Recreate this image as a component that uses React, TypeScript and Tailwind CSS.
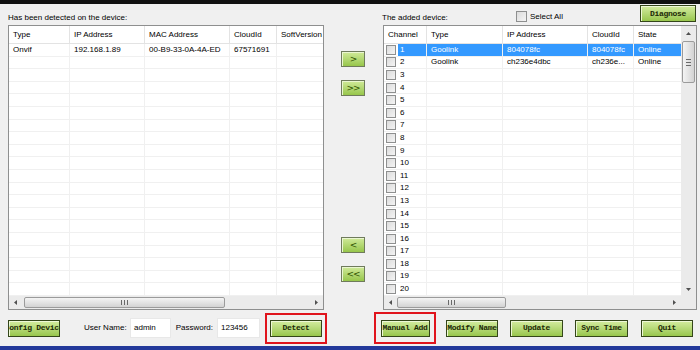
import clsx from 'clsx';

const sans = "font-['Liberation_Sans',Arial,sans-serif]";

function GreenButton({ label, className }: { label: string; className?: string }) {
  return (
    <button
      className={clsx(
        "h-[17px] shrink-0 overflow-hidden whitespace-nowrap flex items-center justify-center border border-[#34461a] bg-linear-to-b from-[#d4ec9f] to-[#98c64c] shadow-[inset_1px_1px_0_#eef8d6] font-['Liberation_Mono',monospace] text-[8px] tracking-[-0.3px] font-bold text-[#1d2a06]",
        className
      )}
    >
      {label}
    </button>
  );
}

function ArrowButton({ label }: { label: string }) {
  return (
    <button className="w-[24px] h-[16px] flex items-center justify-center border border-[#6f7b5c] bg-linear-to-b from-[#d0ea98] to-[#97c64a] shadow-[inset_1px_1px_0_#eaf6d0] font-['DejaVu_Sans',sans-serif] text-[9px] leading-none tracking-[-1px] text-[#2f5200]">
      {label}
    </button>
  );
}

function CheckBox({ size = 10 }: { size?: number }) {
  return (
    <span
      className="inline-block shrink-0 border border-[#8e8f8f] bg-linear-to-br from-[#dcdcdc] to-[#f4f4f4]"
      style={{ width: size, height: size }}
    />
  );
}

function Tri({ dir }: { dir: 'l' | 'r' | 'u' | 'd' }) {
  const pts = { l: '3,0 0,2.5 3,5', r: '0,0 3,2.5 0,5', u: '0,3 2.5,0 5,3', d: '0,0 2.5,3 5,0' }[dir];
  const horiz = dir === 'l' || dir === 'r';
  return (
    <svg width={horiz ? 3 : 5} height={horiz ? 5 : 3} viewBox={horiz ? '0 0 3 5' : '0 0 5 3'}>
      <polygon points={pts} fill="#505050" />
    </svg>
  );
}

function HScroll({ thumbLeft, thumbWidth }: { thumbLeft: number; thumbWidth: number }) {
  return (
    <div className="flex-1 h-[13px] flex items-center bg-[#ebebeb]">
      <div className="w-[13px] h-full flex items-center justify-center"><Tri dir="l" /></div>
      <div className="flex-1 h-full relative">
        <div
          className="absolute top-[1px] bottom-[1px] rounded-[2px] border border-[#9b9b9b] bg-linear-to-b from-[#f4f4f4] to-[#d3d3d3] flex items-center justify-center"
          style={{ left: thumbLeft, width: thumbWidth }}
        >
          <svg width="7" height="5" viewBox="0 0 7 5">
            <path d="M0.5 0v5M3.5 0v5M6.5 0v5" stroke="#6a6a6a" strokeWidth="1" />
          </svg>
        </div>
      </div>
      <div className="w-[13px] h-full flex items-center justify-center"><Tri dir="r" /></div>
    </div>
  );
}

function HeaderCell({ label, w, last }: { label: string; w: number; last?: boolean }) {
  return (
    <div
      className={clsx('h-full shrink-0 flex items-center pl-[4px] whitespace-nowrap overflow-hidden', !last && 'border-r border-[#e3e3e3]')}
      style={{ width: w }}
    >
      {label}
    </div>
  );
}

const leftCols = [
  { label: 'Type', w: 61 },
  { label: 'IP Address', w: 75 },
  { label: 'MAC Address', w: 85 },
  { label: 'CloudId', w: 47 },
  { label: 'SoftVersion', w: 46 },
];

const leftRows = [['Onvif', '192.168.1.89', '00-B9-33-0A-4A-ED', '67571691', '']];

const rightCols = [
  { label: 'Channel', w: 43 },
  { label: 'Type', w: 76 },
  { label: 'IP Address', w: 85 },
  { label: 'CloudId', w: 46 },
  { label: 'State', w: 47 },
];

const rightRows: string[][] = [
  ['Goolink', '804078fc', '804078fc', 'Online'],
  ['Goolink', 'ch236e4dbc', 'ch236e...', 'Online'],
];

function LeftTable() {
  return (
    <div className="w-[316px] h-full border border-[#8e8f8f] bg-white flex flex-col">
      <div className="h-[18px] flex border-b border-[#e3e3e3]">
        {leftCols.map((c, i) => (
          <HeaderCell key={c.label} label={c.label} w={c.w} last={i === leftCols.length - 1} />
        ))}
      </div>
      <div className="flex-1 flex flex-col">
        {Array.from({ length: 20 }).map((_, r) => (
          <div key={r} className="h-[12.6px] flex border-b border-[#f0f0f0]">
            {leftCols.map((c, i) => (
              <div
                key={i}
                className={clsx('h-full shrink-0 pl-[4px] flex items-center whitespace-nowrap overflow-hidden', i < leftCols.length - 1 && 'border-r border-[#f0f0f0]')}
                style={{ width: c.w }}
              >
                {leftRows[r]?.[i] ?? ''}
              </div>
            ))}
          </div>
        ))}
      </div>
      <div className="flex">
        <HScroll thumbLeft={2} thumbWidth={201} />
      </div>
    </div>
  );
}

function RightTable() {
  return (
    <div className="w-[314px] h-full border border-[#8e8f8f] bg-white flex flex-col">
      <div className="flex-1 flex">
        <div className="flex-1 flex flex-col">
          <div className="h-[18px] flex border-b border-[#e3e3e3]">
            {rightCols.map((c, i) => (
              <HeaderCell key={c.label} label={c.label} w={c.w} last={i === rightCols.length - 1} />
            ))}
          </div>
          {Array.from({ length: 20 }).map((_, r) => {
            const data = rightRows[r];
            const sel = r === 0;
            return (
              <div key={r} className="h-[12.6px] flex border-b border-[#f0f0f0]">
                <div className="h-full shrink-0 flex items-center pl-[2px] border-r border-[#f0f0f0]" style={{ width: rightCols[0].w }}>
                  <CheckBox />
                  <div className={clsx('ml-[2px] h-full flex-1 flex items-center pl-[2px]', sel && 'bg-[#3399ff] text-white')}>{r + 1}</div>
                </div>
                {rightCols.slice(1).map((c, i) => (
                  <div
                    key={i}
                    className={clsx(
                      'h-full shrink-0 pl-[4px] flex items-center whitespace-nowrap overflow-hidden',
                      i < rightCols.length - 2 && 'border-r border-[#f0f0f0]',
                      sel && 'bg-[#3399ff] text-white border-[#5aaaff]'
                    )}
                    style={{ width: c.w }}
                  >
                    {data?.[i] ?? ''}
                  </div>
                ))}
              </div>
            );
          })}
        </div>
        {/* vertical scrollbar */}
        <div className="w-[15px] flex flex-col bg-[#ebebeb]">
          <div className="h-[15px] flex items-center justify-center"><Tri dir="u" /></div>
          <div className="flex-1 relative">
            <div className="absolute left-[1px] right-[1px] top-[0px] h-[42px] rounded-[2px] border border-[#9b9b9b] bg-linear-to-r from-[#f4f4f4] to-[#d3d3d3] flex items-center justify-center">
              <svg width="5" height="7" viewBox="0 0 5 7">
                <path d="M0 0.5h5M0 3.5h5M0 6.5h5" stroke="#6a6a6a" strokeWidth="1" />
              </svg>
            </div>
          </div>
          <div className="h-[13px] flex items-center justify-center"><Tri dir="d" /></div>
        </div>
      </div>
      <div className="flex">
        <HScroll thumbLeft={0} thumbWidth={109} />
        <div className="w-[15px] h-[13px] bg-[#ebebeb]" />
      </div>
    </div>
  );
}

export default function App() {
  return (
    <div className={clsx('w-[700px] h-[350px] bg-[#f0f0f0] flex flex-col overflow-hidden text-[8px] text-black', sans)}>
      <div className="h-[4px] bg-[#111111]" />

      {/* Header */}
      <div className="h-[21px] flex">
        <div className="w-[382px] pl-[8px] pt-[8px]">Has been detected on the device:</div>
        <div className="w-[134px] pt-[8px]">The added device:</div>
        <div className="w-[124px] pt-[7px] flex items-start gap-[3px]">
          <CheckBox size={11} />
          <span className="leading-[11px]">Select All</span>
        </div>
        <div className="pt-[1px]">
          <GreenButton label="Diagnose" className="w-[56px]" />
        </div>
      </div>

      {/* Tables */}
      <div className="h-[285px] flex">
        <div className="ml-[8px]">
          <LeftTable />
        </div>
        <div className="w-[59px] flex flex-col pl-[17px] pt-[26px]">
          <ArrowButton label=">" />
          <div className="mt-[13px]"><ArrowButton label=">>" /></div>
          <div className="mt-[141px]"><ArrowButton label="<" /></div>
          <div className="mt-[13px]"><ArrowButton label="<<" /></div>
        </div>
        <RightTable />
      </div>

      {/* Bottom controls */}
      <div className="h-[36px] flex items-center">
        <GreenButton label="Config Device" className="ml-[8px] w-[52px]" />
        <div className="ml-[24px] w-[46px] whitespace-nowrap">User Name:</div>
        <div className="w-[41px] h-[20px] bg-white border border-[#e8e8e8] pl-[3px] flex items-center">admin</div>
        <div className="w-[46px] overflow-hidden flex justify-end pr-[4px] whitespace-nowrap">Password:</div>
        <div className="w-[43px] h-[20px] bg-white border border-[#e8e8e8] pl-[3px] flex items-center">123456</div>
        <div className="ml-[5px] w-[62px] h-[31px] border-2 border-[#e0141c] flex items-center justify-center">
          <GreenButton label="Detect" className="w-[52px]" />
        </div>
        <div className="ml-[47px] w-[62px] h-[32px] border-2 border-[#e0141c] flex items-center justify-center">
          <GreenButton label="Manual Add" className="w-[49px]" />
        </div>
        <GreenButton label="Modify Name" className="ml-[10px] w-[52px]" />
        <GreenButton label="Update" className="ml-[12px] w-[53px]" />
        <GreenButton label="Sync Time" className="ml-[12px] w-[53px]" />
        <GreenButton label="Quit" className="ml-[13px] w-[52px]" />
      </div>

      <div className="flex-1 bg-[#23399a]" />
    </div>
  );
}
